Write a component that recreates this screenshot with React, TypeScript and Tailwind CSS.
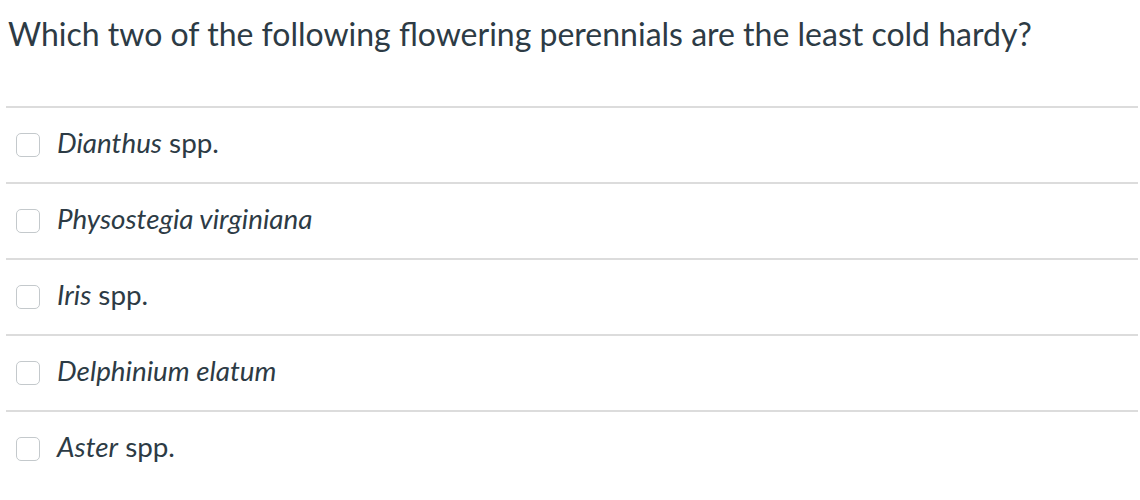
import React from 'react';

const options: { italic: string; rest?: string }[] = [
  { italic: 'Dianthus', rest: ' spp.' },
  { italic: 'Physostegia virginiana' },
  { italic: 'Iris', rest: ' spp.' },
  { italic: 'Delphinium elatum' },
  { italic: 'Aster', rest: ' spp.' },
];

export default function App() {
  return (
    <div className="w-[1140px] h-[500px] bg-white text-[#2d3b45] font-['Lato','Open_Sans',sans-serif]">
      <div className="pl-[8px] pt-[14px] h-[106px]">
        <h1 className="text-[32px] leading-[40px] font-normal">
          Which two of the following flowering perennials are the least cold hardy?
        </h1>
      </div>
      <div className="ml-[6px] mr-[2px]">
        {options.map((o, i) => (
          <div key={i} className="h-[76px] border-t-2 border-[#dcdcdc] flex items-center">
            <span className="ml-[10px] w-[24px] h-[24px] rounded-[5px] border border-[#c4c9cc] bg-white shrink-0" />
            <span className="ml-[17px] text-[27.8px] leading-[32px] -mt-[4px]">
              <em className="italic">{o.italic}</em>
              {o.rest}
            </span>
          </div>
        ))}
      </div>
    </div>
  );
}
